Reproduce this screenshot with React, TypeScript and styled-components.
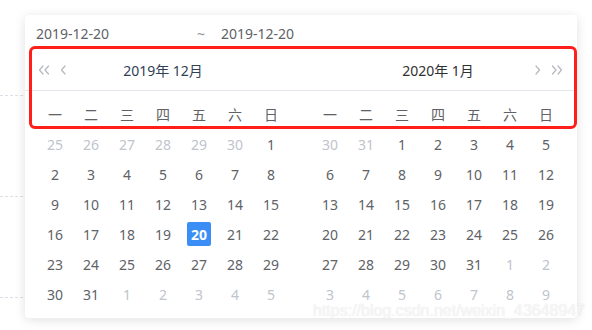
import React from "react";
import styled, { createGlobalStyle } from "styled-components";

const GlobalStyle = createGlobalStyle`
    html, body {
        margin: 0;
        padding: 0;
        background: #fff;
    }
    body {
        font-family: "Noto Sans", "Noto Sans CJK SC", sans-serif;
        font-size: 14px;
        color: #606266;
    }
`;

const Page = styled.div`
    position: relative;
    width: 592px;
    height: 330px;
    overflow: hidden;
`;

const TableBehind = styled.div`
    display: grid;
    grid-template-rows: 96px 101px 101px;
    width: 300px;
`;

const BehindRow = styled.div`
    box-sizing: border-box;
    border-bottom: 1px dashed #dcdfe6;
`;

const Popper = styled.div`
    position: absolute;
    left: 25px;
    top: 15px;
    width: 552px;
    height: 303px;
    box-sizing: border-box;
    background: #fff;
    border-radius: 4px;
    box-shadow: 0 2px 12px 0 rgba(0, 0, 0, 0.12);
    display: flex;
    flex-direction: column;
`;

const Editors = styled.div`
    display: flex;
    align-items: center;
    height: 35px;
    padding: 3px 11px 0;
    box-sizing: border-box;
    line-height: 18px;
    color: #606266;
`;

const EditorValue = styled.span`
    width: 161px;
`;

const Tilde = styled.span`
    width: 24px;
    color: #909399;
`;

const Header = styled.div`
    display: flex;
    justify-content: space-between;
    height: 41px;
    padding: 0 13px 0 12px;
    box-sizing: border-box;
    border-bottom: 1px solid #e4e7ed;
`;

const HeaderHalf = styled.div`
    width: 252px;
    display: grid;
    grid-template-columns: 1fr auto 1fr;
    align-items: center;
`;

const Arrows = styled.div<{ $end?: boolean }>`
    display: flex;
    align-items: center;
    gap: 10px;
    justify-content: ${({ $end }) => ($end ? "flex-end" : "flex-start")};
    padding: ${({ $end }) => ($end ? "0 1px 0 0" : "0 0 0 1px")};
    color: #b4b8bf;
`;

const Title = styled.div<{ $blue?: boolean }>`
    font-weight: 400;
    font-size: 14px;
    color: ${({ $blue }) => ($blue ? "#2f4156" : "#303133")};
`;

const Body = styled.div`
    display: flex;
    justify-content: space-between;
    padding: 8px 13px 0 12px;
`;

const Grid = styled.div`
    display: grid;
    grid-template-columns: repeat(7, 36px);
    grid-auto-rows: 30px;
`;

const Cell = styled.div<{ $muted?: boolean }>`
    display: flex;
    align-items: center;
    justify-content: center;
    color: ${({ $muted }) => ($muted ? "#c0c4cc" : "#606266")};
`;

const Selected = styled.span`
    width: 24px;
    height: 24px;
    border-radius: 2px;
    background: #3a8ef6;
    color: #fff;
    font-weight: 700;
    display: flex;
    align-items: center;
    justify-content: center;
`;

const Highlight = styled.div`
    position: absolute;
    left: 29px;
    top: 46px;
    width: 548px;
    height: 83px;
    box-sizing: border-box;
    border: 3.5px solid #ff1f1a;
    border-radius: 6px;
`;

const Watermark = styled.div`
    position: absolute;
    left: 313px;
    top: 301px;
    font-family: "Liberation Sans", Arial, sans-serif;
    font-size: 16px;
    line-height: 20px;
    color: rgba(255, 255, 255, 0.75);
    text-shadow: 0 0 1px rgba(160, 160, 160, 0.4);
    white-space: nowrap;
`;

const WEEK = ["一", "二", "三", "四", "五", "六", "日"];

type Day = { d: number; muted: boolean };

const buildMonth = (year: number, month: number): Day[] => {
    const first = new Date(year, month, 1);
    const offset = (first.getDay() + 6) % 7 || 7; // leading days from previous month
    const start = new Date(year, month, 1 - offset);
    const days: Day[] = [];
    for (let i = 0; i < 42; i++) {
        const dt = new Date(start.getFullYear(), start.getMonth(), start.getDate() + i);
        days.push({ d: dt.getDate(), muted: dt.getMonth() !== month });
    }
    return days;
};

const Chevron = ({ dir, double }: { dir: "left" | "right"; double?: boolean }) => (
    <svg width={double ? 12 : 6} height="10" viewBox={double ? "0 0 12 10" : "0 0 6 10"} fill="none">
        <g
            stroke="currentColor"
            strokeWidth="1.2"
            strokeLinecap="round"
            strokeLinejoin="round"
            transform={dir === "right" ? `translate(${double ? 12 : 6} 0) scale(-1 1)` : undefined}
        >
            <path d="M5 1 L1.5 5 L5 9" />
            {double && <path d="M10.5 1 L7 5 L10.5 9" />}
        </g>
    </svg>
);

const Month = ({ days, selected }: { days: Day[]; selected?: number }) => (
    <Grid>
        {WEEK.map((w) => (
            <Cell key={w}>{w}</Cell>
        ))}
        {days.map((day, i) => (
            <Cell key={i} $muted={day.muted}>
                {!day.muted && day.d === selected ? <Selected>{day.d}</Selected> : day.d}
            </Cell>
        ))}
    </Grid>
);

export default function App() {
    const dec = buildMonth(2019, 11);
    const jan = buildMonth(2020, 0);
    return (
        <Page>
            <GlobalStyle />
            <TableBehind>
                <BehindRow />
                <BehindRow />
                <BehindRow />
            </TableBehind>
            <Popper>
                <Editors>
                    <EditorValue>2019-12-20</EditorValue>
                    <Tilde>~</Tilde>
                    <span>2019-12-20</span>
                </Editors>
                <Header>
                    <HeaderHalf>
                        <Arrows>
                            <Chevron dir="left" double />
                            <Chevron dir="left" />
                        </Arrows>
                        <Title $blue>2019年 12月</Title>
                        <span />
                    </HeaderHalf>
                    <HeaderHalf>
                        <span />
                        <Title>2020年 1月</Title>
                        <Arrows $end>
                            <Chevron dir="right" />
                            <Chevron dir="right" double />
                        </Arrows>
                    </HeaderHalf>
                </Header>
                <Body>
                    <Month days={dec} selected={20} />
                    <Month days={jan} />
                </Body>
            </Popper>
            <Highlight />
            <Watermark>https://blog.csdn.net/weixin_43648947</Watermark>
        </Page>
    );
}
